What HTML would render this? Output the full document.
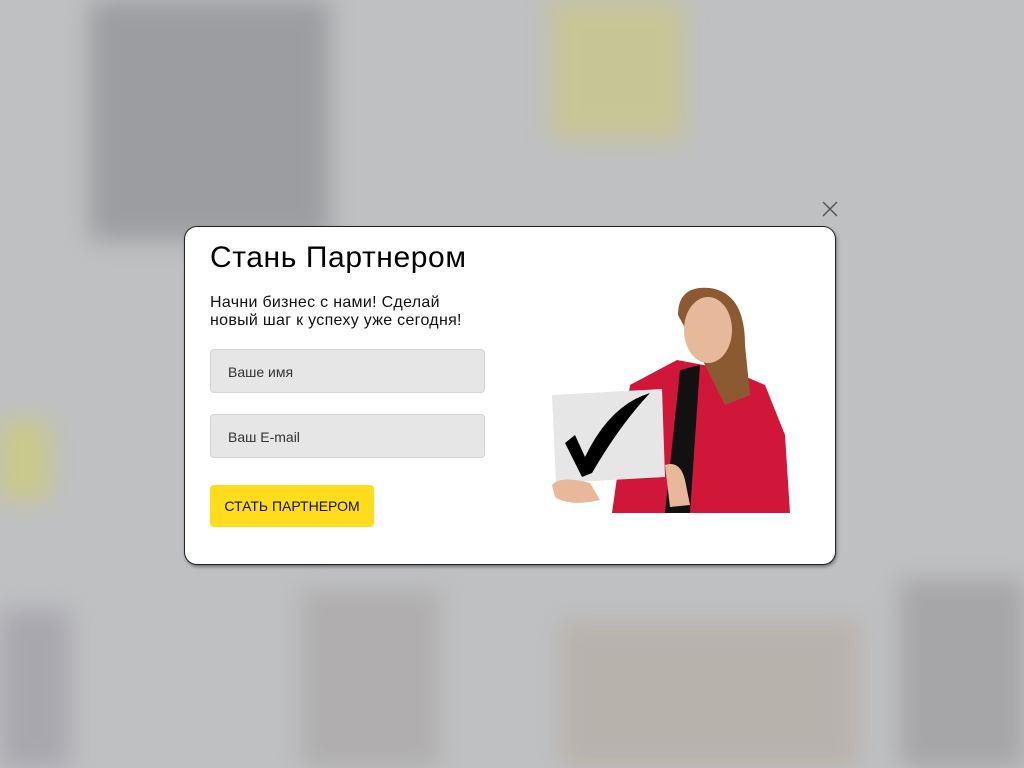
<!DOCTYPE html>
<html><head><meta charset="utf-8"><style>
html,body{margin:0;width:1024px;height:768px;overflow:hidden;background:#bfc0c2;font-family:"Liberation Sans","DejaVu Sans",sans-serif}
.bg{position:absolute;filter:blur(12px)}
.modal{position:absolute;left:185px;top:227px;width:650px;height:337px;background:#fff;border-radius:12px;box-shadow:0 0 0 1px #222,1px 2px 4px rgba(0,0,0,.6)}
h1{position:absolute;left:25px;top:14px;margin:0;font-weight:normal;font-size:30px;color:#000;letter-spacing:.6px}
.sub{position:absolute;left:25px;top:67px;font-size:16px;line-height:18px;color:#111;letter-spacing:.3px}
.inp{position:absolute;left:25px;width:275px;height:44px;background:#e6e6e6;border:1px solid #d4d4d4;border-radius:4px;font-size:14px;color:#333;line-height:44px;padding-left:17px;box-sizing:border-box}
.btn{position:absolute;left:25px;top:258px;width:164px;height:42px;background:#ffdd1c;border-radius:4px;font-size:14px;color:#111;line-height:42px;text-align:center}
.x{position:absolute;left:820px;top:199px}
</style></head><body>
<div class="bg" style="left:90px;top:0;width:240px;height:240px;background:#9c9da0"></div>
<div class="bg" style="left:550px;top:0;width:135px;height:140px;background:#c6c596"></div>
<div class="bg" style="left:0;top:420px;width:50px;height:80px;background:#c9c98a"></div>
<div class="bg" style="left:0;top:610px;width:70px;height:158px;background:#a8a7ae"></div>
<div class="bg" style="left:300px;top:590px;width:140px;height:178px;background:#b0aeae"></div>
<div class="bg" style="left:560px;top:620px;width:300px;height:148px;background:#b8b2ad"></div>
<div class="bg" style="left:900px;top:580px;width:124px;height:188px;background:#a6a5a7"></div>
<svg class="x" width="20" height="20"><path d="M3 3L17 17M17 3L3 17" stroke="#555" stroke-width="1.5"/></svg>
<div class="modal">
<h1>Стань Партнером</h1>
<div class="sub">Начни бизнес с нами! Сделай<br>новый шаг к успеху уже сегодня!</div>
<div class="inp" style="top:122px">Ваше имя</div>
<div class="inp" style="top:187px">Ваш E-mail</div>
<div class="btn">СТАТЬ ПАРТНЕРОМ</div>
<svg style="position:absolute;left:365px;top:58px" width="245" height="230">
<path d="M127 75 L80 100 L62 228 L240 228 L235 150 L215 100 L180 85 Z" fill="#d0173a"/>
<path d="M130 85 L150 80 L140 228 L115 228 Z" fill="#111"/>
<path d="M128 30 Q128 0 160 3 Q195 8 195 60 L200 110 L175 120 L155 80 Z" fill="#8b5a32"/>
<ellipse cx="158" cy="45" rx="24" ry="33" fill="#e8b89a"/>
<path d="M2 110 L112 104 L115 192 L6 198 Z" fill="#e6e6e6"/>
<path d="M15 158 L25 150 L35 172 Q60 120 100 108 Q70 140 42 188 L32 192 Z" fill="#000"/>
<path d="M2 200 Q10 190 40 198 L50 215 Q20 222 5 212 Z M115 180 Q130 175 135 195 L140 220 L120 222 Z" fill="#e8b89a"/>
</svg>
</div>
</body></html>
